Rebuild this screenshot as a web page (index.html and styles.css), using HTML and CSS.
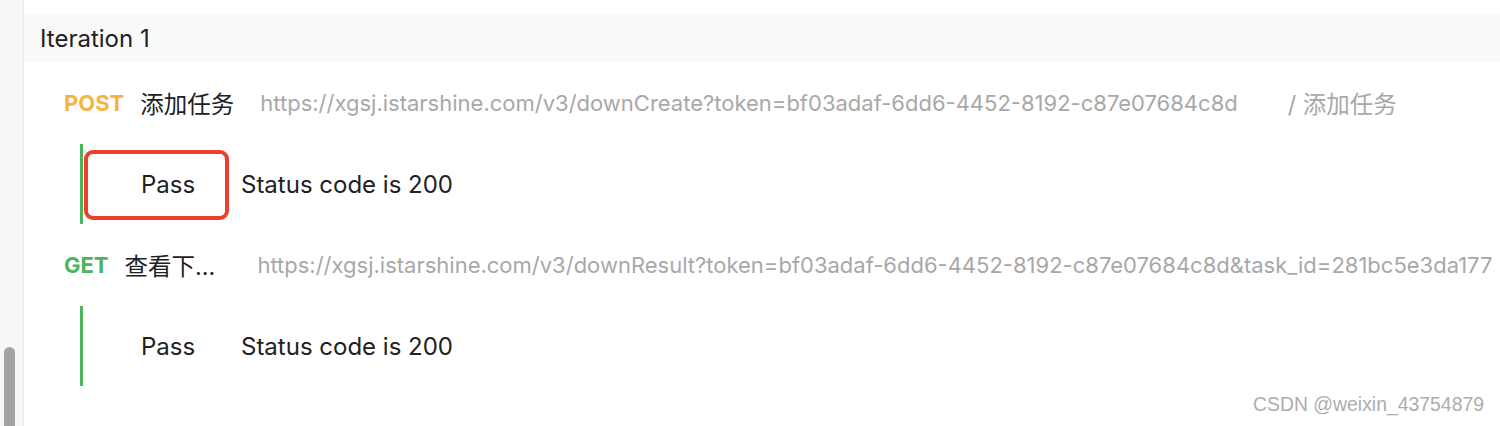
FILE: index.html
```html
<!DOCTYPE html>
<html>
<head>
<meta charset="utf-8">
<link rel="stylesheet" href="styles.css">
</head>
<body>
<div class="page">
  <aside class="sidebar"><div class="thumb"></div></aside>
  <main class="main">
    <div class="iter-head">Iteration 1</div>
    <div class="req">
      <span class="method post">POST</span>
      <span class="name">添加任务</span>
      <span class="url">https://xgsj.istarshine.com/v3/downCreate?token=bf03adaf-6dd6-4452-8192-c87e07684c8d</span>
      <span class="path">/ 添加任务</span>
    </div>
    <div class="test">
      <span class="result">Pass</span>
      <span class="desc">Status code is 200</span>
      <div class="mark"></div>
    </div>
    <div class="req">
      <span class="method get">GET</span>
      <span class="name short">查看下...</span>
      <span class="url">https://xgsj.istarshine.com/v3/downResult?token=bf03adaf-6dd6-4452-8192-c87e07684c8d&amp;task_id=281bc5e3da177</span>
    </div>
    <div class="test">
      <span class="result">Pass</span>
      <span class="desc">Status code is 200</span>
    </div>
  </main>
  <div class="watermark">CSDN @weixin_43754879</div>
</div>
</body>
</html>
```
FILE: styles.css
```css
html, body {
  margin: 0;
  padding: 0;
  background: #fff;
}
.page {
  position: relative;
  display: flex;
  width: 1500px;
  height: 426px;
  overflow: hidden;
  font-family: Inter, "Noto Sans CJK SC", sans-serif;
  color: #212121;
}
.sidebar {
  position: relative;
  width: 23px;
  flex: none;
  background: #f7f7f7;
  border-right: 1px solid #ebebeb;
}
.thumb {
  position: absolute;
  left: 4px;
  top: 347px;
  width: 11px;
  height: 100px;
  border-radius: 6px 6px 0 0;
  background: #a3a3a3;
}
.main {
  flex: 1;
  min-width: 0;
  padding-top: 15px;
  overflow: hidden;
}
.iter-head {
  height: 47px;
  display: flex;
  align-items: center;
  padding-left: 16px;
  background: #f9f9f9;
  font-size: 24px;
  color: #212121;
}
.req {
  height: 82px;
  display: flex;
  align-items: center;
  padding-left: 40px;
  white-space: nowrap;
}
.method {
  font-size: 22px;
  font-weight: 700;
  margin-right: 16px;
}
.post { color: #f5b43f; }
.get { color: #4db35c; }
.name {
  font-size: 23.5px;
  margin-right: 26px;
}
.name.short { margin-right: 42px; }
.url {
  font-size: 22px;
  color: #a8a8a8;
}
.path {
  font-size: 23.5px;
  color: #a8a8a8;
  margin-left: 50px;
}
.test {
  position: relative;
  height: 80px;
  margin-left: 56px;
  border-left: 3px solid #4db35c;
  display: flex;
  align-items: center;
  font-size: 24px;
}
.result {
  width: 100px;
  margin-left: 58px;
}
.mark {
  position: absolute;
  left: 1px;
  top: 6px;
  width: 137px;
  height: 62px;
  border: 4px solid #e9412b;
  border-radius: 9px;
}
.watermark {
  position: absolute;
  right: 16px;
  bottom: 10px;
  font-family: "Liberation Sans", Arial, sans-serif;
  font-size: 19.4px;
  color: #adadad;
}
```
